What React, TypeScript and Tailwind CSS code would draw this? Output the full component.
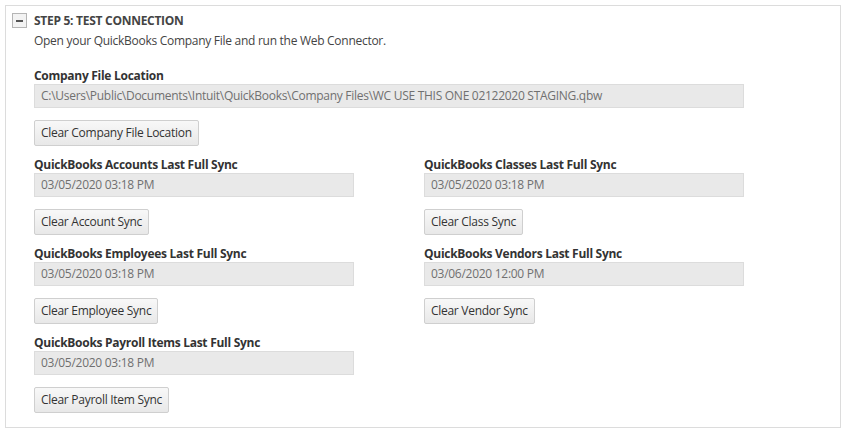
import React from 'react'

const font = { fontFamily: '"Open Sans", "Noto Sans", sans-serif' }

function Field({ label, value, button, wide }: { label: string; value: string; button: string; wide?: boolean }) {
  return (
    <div className="flex flex-col">
      <div className="h-[16px] text-[12px] font-bold leading-[16px] text-[#333] tracking-[-0.28px]">{label}</div>
      <div
        className={`${wide ? 'w-[710px]' : 'w-[320px]'} h-[24px] border border-[#dcdcdc] bg-[#e9e9e9] px-[6px] text-[12px] leading-[22px] text-[#707070] tracking-[-0.28px]`}
      >
        {value}
      </div>
      <div className="mt-[12px] flex">
        <button className="h-[26px] rounded-[2px] border border-[#cfcfcf] bg-gradient-to-b from-[#f8f8f8] to-[#e8e8e8] px-[6px] text-[12px] leading-[24px] text-[#333] tracking-[-0.28px]">
          {button}
        </button>
      </div>
    </div>
  )
}

export default function App() {
  return (
    <div className="w-[846px] h-[432px] bg-white p-[5px]" style={font}>
      <div className="h-[423px] border border-[#dcdcdc] px-[6px] pt-[7px]">
        <div className="flex items-center h-[15px]">
          <div className="w-[15px] h-[15px] border border-[#b5b5b5] bg-[#f3f3f3] flex items-center justify-center">
            <div className="w-[7px] h-[2px] bg-[#555]" />
          </div>
          <div className="ml-[7px] text-[12px] font-bold text-[#444] tracking-[-0.28px]">STEP 5: TEST CONNECTION</div>
        </div>
        <div className="pl-[22px]">
          <div className="mt-[4px] h-[18px] text-[12px] leading-[18px] text-[#444] tracking-[-0.28px]">
            Open your QuickBooks Company File and run the Web Connector.
          </div>
          <div className="mt-[18px] flex flex-col gap-[11px]">
            <Field
              wide
              label="Company File Location"
              value="C:\Users\Public\Documents\Intuit\QuickBooks\Company Files\WC USE THIS ONE 02122020 STAGING.qbw"
              button="Clear Company File Location"
            />
            <div className="grid grid-cols-[390px_320px] gap-y-[11px]">
              <Field label="QuickBooks Accounts Last Full Sync" value="03/05/2020 03:18 PM" button="Clear Account Sync" />
              <Field label="QuickBooks Classes Last Full Sync" value="03/05/2020 03:18 PM" button="Clear Class Sync" />
              <Field label="QuickBooks Employees Last Full Sync" value="03/05/2020 03:18 PM" button="Clear Employee Sync" />
              <Field label="QuickBooks Vendors Last Full Sync" value="03/06/2020 12:00 PM" button="Clear Vendor Sync" />
              <Field label="QuickBooks Payroll Items Last Full Sync" value="03/05/2020 03:18 PM" button="Clear Payroll Item Sync" />
            </div>
          </div>
        </div>
      </div>
    </div>
  )
}
